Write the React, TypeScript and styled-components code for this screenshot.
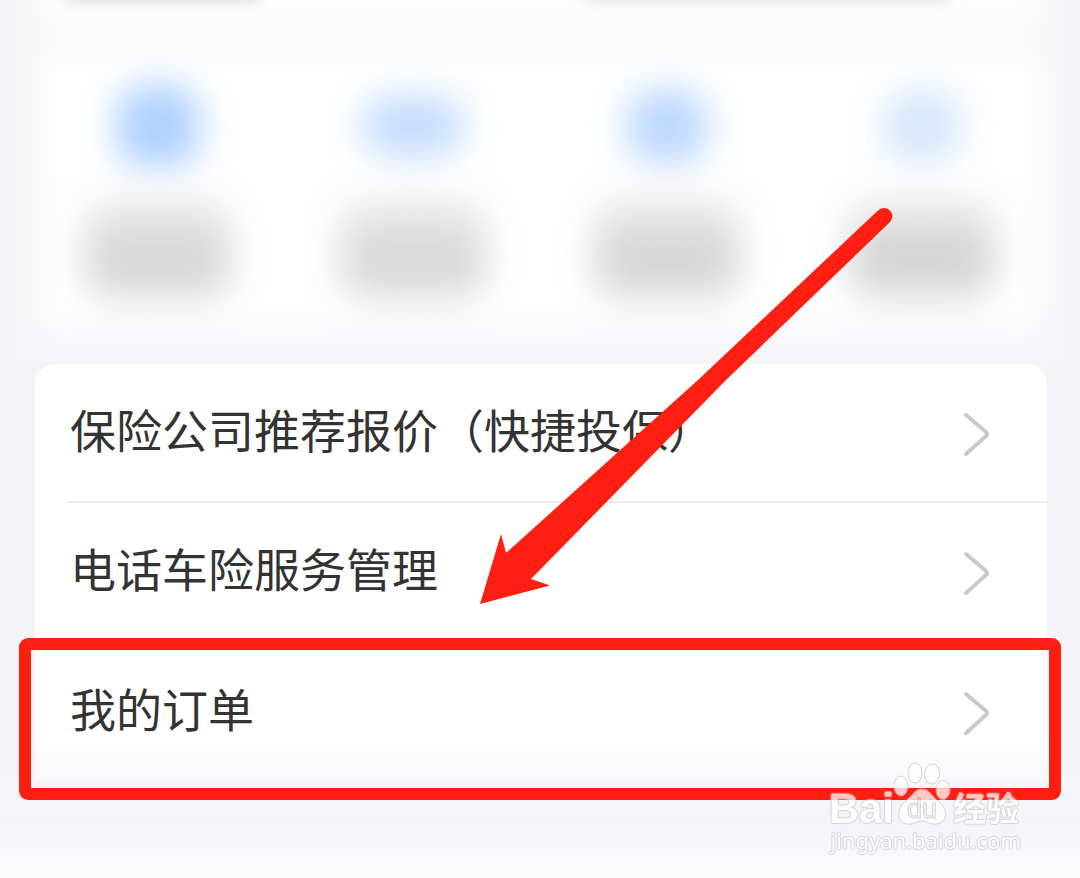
import React from "react";
import styled, { createGlobalStyle } from "styled-components";

const GlobalStyle = createGlobalStyle`
  * { box-sizing: border-box; }
  body {
    margin: 0;
    background: #f3f3f8;
    font-family: "Noto Sans CJK SC", "Noto Sans", sans-serif;
    color: #333333;
  }
`;

const Page = styled.main`
  position: relative;
  display: flex;
  flex-direction: column;
  overflow: hidden;
`;

const Shortcuts = styled.section`
  position: relative;
  display: grid;
  grid-template-columns: repeat(4, 1fr);
  height: 364px;
  padding: 78px 31px 0;
  background:
    linear-gradient(to right, #f4f4f6 16px, rgba(255, 255, 255, 0) 60px),
    linear-gradient(to left, #f4f4f7 12px, rgba(255, 255, 255, 0) 60px),
    linear-gradient(to bottom, #fdfdfd 12px, #fafafa 30px, #fafafa 46px, #ffffff 72px, #ffffff 305px, #f9f9fc 335px, #f5f5f8 362px);
`;

const TopShade = styled.div<{ $left: string; $width: string; $color: string }>`
  position: absolute;
  top: -10px;
  left: ${(p) => p.$left};
  width: ${(p) => p.$width};
  height: 12px;
  background: ${(p) => p.$color};
  filter: blur(6px);
`;

const Shortcut = styled.div`
  display: flex;
  flex-direction: column;
  align-items: center;
  gap: 26px;
`;

const IconSlot = styled.div`
  display: flex;
  align-items: center;
  justify-content: center;
  height: 96px;
`;

const IconBlur = styled.div<{ $w: number; $h: number; $color: string }>`
  width: ${(p) => p.$w}px;
  height: ${(p) => p.$h}px;
  border-radius: 32px;
  background: ${(p) => p.$color};
  filter: blur(18px);
`;

const LabelBlur = styled.div<{ $color: string }>`
  width: 144px;
  height: 100px;
  border-radius: 24px;
  background: linear-gradient(to bottom, #ececec, ${(p) => p.$color} 60%, #e2e2e2);
  filter: blur(19px);
`;

const List = styled.nav`
  position: relative;
  display: flex;
  flex-direction: column;
  margin: 0 33px 0 35px;
  border-radius: 20px 20px 0 0;
  background: linear-gradient(to bottom, #ffffff 375px, #f8f8fb 420px);
`;

const Row = styled.a`
  position: relative;
  display: flex;
  align-items: center;
  justify-content: space-between;
  height: 139px;
  margin-left: 33px;
  padding: 2px 57px 0 2px;
  border-bottom: 2px solid #ececee;
  color: inherit;
  text-decoration: none;
  font-size: 46px;
  line-height: 68px;
  white-space: nowrap;

  &:last-child {
    border-bottom: 0;
  }
`;

const RowLabel = styled.span`
  padding-bottom: 12px;
`;

const Highlight = styled.span`
  position: absolute;
  top: -4px;
  right: -14px;
  left: -49px;
  height: 162px;
  border: 12px solid #ff1f12;
  border-radius: 9px;
  pointer-events: none;
`;

const Chevron = styled.svg`
  width: 27px;
  height: 46px;
  fill: none;
  stroke: #c9c9c9;
  stroke-width: 4;
  stroke-linecap: round;
  stroke-linejoin: round;
`;

const Arrow = styled.svg`
  position: absolute;
  top: 204px;
  left: 476px;
  width: 420px;
  height: 404px;
  fill: #ff1f12;
  pointer-events: none;
`;

const Footer = styled.footer`
  height: 97px;
  background: linear-gradient(to bottom, #f5f5f9 0, #f3f3f8 45px, #fbfbfd 80px, #fdfdfe 97px);
`;

const Watermark = styled.div`
  position: absolute;
  right: 59px;
  bottom: 24px;
  display: flex;
  flex-direction: column;
  align-items: flex-end;
  color: #ffffff;
  opacity: 0.75;
  text-shadow: 1px 0 1px #c8c8ce, -1px 0 1px #c8c8ce, 0 1px 1px #c8c8ce, 0 -1px 1px #c8c8ce;
`;

const Brand = styled.div`
  display: flex;
  align-items: flex-end;
  height: 64px;
  padding-right: 2px;
`;

const BrandLatin = styled.span`
  font: bold 42px/34px "Liberation Sans", sans-serif;
`;

const BrandHan = styled.span`
  font: bold 33px/38px "Noto Sans CJK SC", sans-serif;
`;

const Paw = styled.svg`
  width: 59px;
  height: 64px;
  fill: #ffffff;
  stroke: #c4c4ca;

  text {
    font: 27px "Liberation Sans", sans-serif;
    text-shadow: none;
  }
`;

const Site = styled.span`
  font: 22px/28px "Noto Sans", sans-serif;
`;

const shortcuts = [
  { w: 84, h: 84, icon: "#aed0ff", label: "#d2d2d2" },
  { w: 104, h: 62, icon: "#c4ddfd", label: "#d5d5d5" },
  { w: 82, h: 76, icon: "#bcd8ff", label: "#d1d1d1" },
  { w: 78, h: 74, icon: "#d6e6fc", label: "#cfcfcf" },
];

const rows = ["保险公司推荐报价（快捷投保）", "电话车险服务管理", "我的订单"];

export default function App() {
  return (
    <>
      <GlobalStyle />
      <Page>
        <Shortcuts>
          <TopShade $left="6%" $width="18%" $color="#dcdcdc" />
          <TopShade $left="54%" $width="34%" $color="#e6e6e6" />
          {shortcuts.map((s, i) => (
            <Shortcut key={i}>
              <IconSlot>
                <IconBlur $w={s.w} $h={s.h} $color={s.icon} />
              </IconSlot>
              <LabelBlur $color={s.label} />
            </Shortcut>
          ))}
        </Shortcuts>
        <List>
          {rows.map((label, i) => (
            <Row href="#" key={label}>
              <RowLabel>{label}</RowLabel>
              <Chevron viewBox="0 0 27 46" aria-hidden="true">
                <path d="M3 4 L23 21 Q25 23 23 25 L3 43" />
              </Chevron>
              {i === rows.length - 1 && <Highlight />}
            </Row>
          ))}
        </List>
        <Footer />
        <Arrow viewBox="476 204 420 404" aria-hidden="true">
          <path d="M480 604 L501 534 L506 553 L698 380 L878 210.500 A8 8 0 0 1 890 222 L726 380 L531 579 L550 585.500 Z" />
        </Arrow>
        <Watermark>
          <Brand>
            <BrandLatin>Bai</BrandLatin>
            <Paw viewBox="2 0 59 64" aria-hidden="true">
              <ellipse cx="9" cy="24" rx="7" ry="10" />
              <ellipse cx="23" cy="11" rx="7" ry="10" />
              <ellipse cx="40" cy="12" rx="7.500" ry="10" transform="rotate(8 40 12)" />
              <ellipse cx="51" cy="28" rx="7" ry="9.500" />
              <path d="M30 27 C38 27 40 35 47 40 C55 46 57 60 45 62 C37 63 35 59 30 59 C25 59 23 63 15 62 C4 60 5 46 12 40 C20 35 22 27 30 27 Z" />
              <text x="15" y="56">du</text>
            </Paw>
            <BrandHan>经验</BrandHan>
          </Brand>
          <Site>jingyan.baidu.com</Site>
        </Watermark>
      </Page>
    </>
  );
}
